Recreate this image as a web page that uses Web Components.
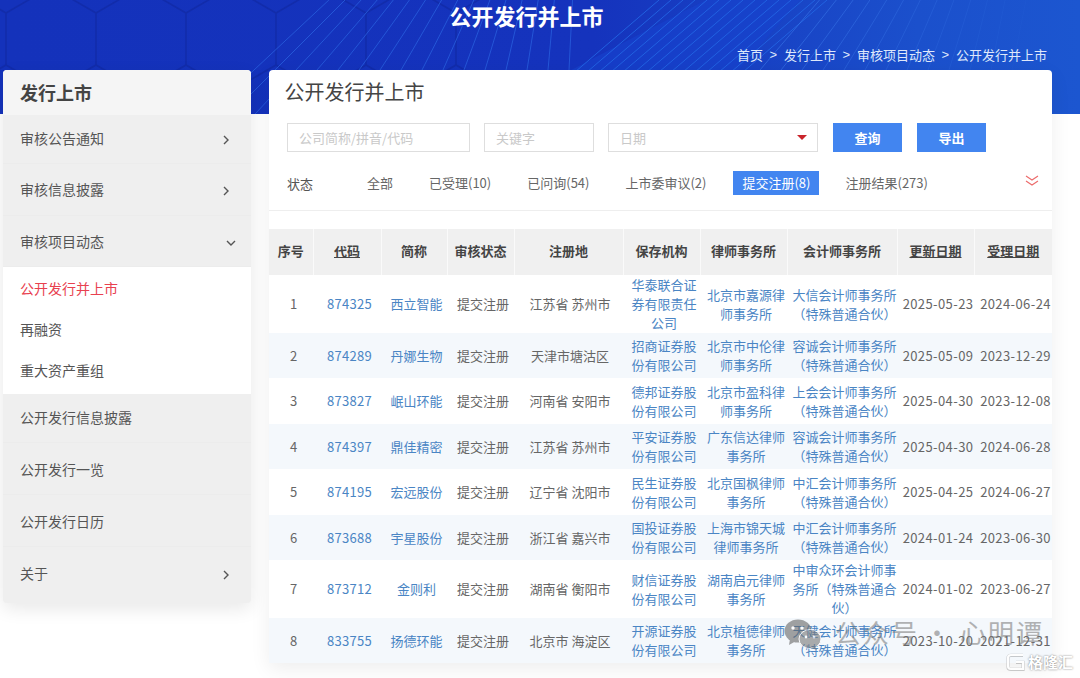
<!DOCTYPE html>
<html lang="zh-CN">
<head>
<meta charset="utf-8">
<title>公开发行并上市</title>
<style>
  html, body { margin: 0; height: 678px; overflow: hidden; background: #fff; }
  body { font-family: "Noto Sans CJK SC", "Liberation Sans", sans-serif; color: #666; }
</style>
</head>
<body>
<page-banner>
  <span slot="title">公开发行并上市</span>
  <span>首页</span><span>发行上市</span><span>审核项目动态</span><span>公开发行并上市</span>
</page-banner>
<page-body>
  <side-nav slot="side"></side-nav>
  <listing-card slot="main"></listing-card>
</page-body>
<water-mark></water-mark>

<script>
// --- Data ---
const NAV = [
    { label: '审核公告通知', h: 49, pb: 2, arrow: 'right' },
    { label: '审核信息披露', h: 51.5, arrow: 'right' },
    { label: '审核项目动态', h: 51.5, arrow: 'down', children: ['公开发行并上市', '再融资', '重大资产重组'] },
    { label: '公开发行信息披露', h: 49, pb: 2 },
    { label: '公开发行一览', h: 52 },
    { label: '公开发行日历', h: 52 },
    { label: '关于', h: 56, pb: 4, arrow: 'right' }
];

const FILTERS = ['全部', '已受理(10)', '已问询(54)', '上市委审议(2)', '提交注册(8)', '注册结果(273)'];

const COLUMNS = [
    ['序号', 44], ['代码', 68, true], ['简称', 66], ['审核状态', 67], ['注册地', 109],
    ['保存机构', 77], ['律师事务所', 87], ['会计师事务所', 110], ['更新日期', 77, true], ['受理日期', 78, true]
];

const SPECIAL = '（特殊普通合伙）';
const ROWS = [
    ['874325', '西立智能', '江苏省 苏州市', '华泰联合证券有限责任公司', '北京市嘉源律师事务所', '大信会计师事务所' + SPECIAL, '2025-05-23', '2024-06-24'],
    ['874289', '丹娜生物', '天津市塘沽区', '招商证券股份有限公司', '北京市中伦律师事务所', '容诚会计师事务所' + SPECIAL, '2025-05-09', '2023-12-29'],
    ['873827', '岷山环能', '河南省 安阳市', '德邦证券股份有限公司', '北京市盈科律师事务所', '上会会计师事务所' + SPECIAL, '2025-04-30', '2023-12-08'],
    ['874397', '鼎佳精密', '江苏省 苏州市', '平安证券股份有限公司', '广东信达律师事务所', '容诚会计师事务所' + SPECIAL, '2025-04-30', '2024-06-28'],
    ['874195', '宏远股份', '辽宁省 沈阳市', '民生证券股份有限公司', '北京国枫律师事务所', '中汇会计师事务所' + SPECIAL, '2025-04-25', '2024-06-27'],
    ['873688', '宇星股份', '浙江省 嘉兴市', '国投证券股份有限公司', '上海市锦天城律师事务所', '中汇会计师事务所' + SPECIAL, '2024-01-24', '2023-06-30'],
    ['873712', '金则利', '湖南省 衡阳市', '财信证券股份有限公司', '湖南启元律师事务所', '中审众环会计师事务所' + SPECIAL, '2024-01-02', '2023-06-27'],
    ['833755', '扬德环能', '北京市 海淀区', '开源证券股份有限公司', '北京植德律师事务所', '天健会计师事务所' + SPECIAL, '2023-10-20', '2021-12-31']
];

// --- Banner with the hexagon and line artwork ---
class PageBanner extends HTMLElement {
    constructor() {
        super();
        this.attachShadow({ mode: 'open' });
    }

    connectedCallback() {
        const crumbs = [...this.querySelectorAll(':scope > span:not([slot])')];
        crumbs.forEach((c, i) => {
            c.slot = 'c' + i;
        });
        this.shadowRoot.innerHTML = `
            <style>
                :host {
                    display: block;
                    height: 114px;
                    overflow: hidden;
                    position: relative;
                    background: linear-gradient(90deg, #1432bb 0%, #1533bd 55%, #1b50cc 85%, #1c56d0 100%);
                }
                svg { position: absolute; left: 0; top: 0; }
                .inner {
                    position: relative;
                    height: 100%;
                    box-sizing: border-box;
                    display: flex;
                    flex-direction: column;
                    align-items: center;
                }
                .title {
                    margin: -1px 27px 0 0;
                    font-size: 22px;
                    line-height: 33px;
                    font-weight: 700;
                    color: #fff;
                }
                .crumbs {
                    align-self: flex-end;
                    margin: 14px 33px 0 0;
                    display: flex;
                    font-size: 13px;
                    line-height: 18px;
                    color: #dfe8fb;
                }
                .sep { margin: 0 7px 0 6.4px; font-family: "Liberation Sans", sans-serif; }
            </style>
            <svg width="1080" height="114" viewBox="0 0 1080 114">${this.art()}</svg>
            <div class="inner">
                <div class="title"><slot name="title"></slot></div>
                <div class="crumbs">
                    ${crumbs.map((c, i) => `<slot name="c${i}"></slot>${i < crumbs.length - 1 ? '<span class="sep">&gt;</span>' : ''}`).join('')}
                </div>
            </div>
        `;
    }

    art() {
        let out = '';
        // hexagons, left part
        let hex = '';
        for (let col = 0; col < 6; col++) {
            const x = 6 + col * 90;
            hex += `M${x - 45} -13L${x} 13L${x + 45} -13M${x} 13V65M${x - 45} 91L${x} 65L${x + 45} 91M${x + 45} 91V114M${x - 45} 91V114`;
        }
        out += `<path d="${hex}" fill="none" stroke="#122aa6" stroke-width="1.6" opacity=".8"/>`;

        // fan of thin lines over the middle
        for (let i = -1; i < 15; i++) {
            const xb = 275 + i * 21;
            const k = Math.max(0.05, (575 - xb) / 300);
            out += `<line x1="${xb - 44 * k}" y1="114" x2="${xb + 70 * k}" y2="0" stroke="#2a62e0" stroke-width="1" opacity=".75"/>`;
        }

        // brighter sheet at the right of the title
        out += '<path d="M560 76Q620 44 706 0H800L700 114H560Z" fill="#1844cf" opacity=".55"/>';
        for (let i = 0; i < 15; i++) {
            const xb = 575 + i * 12;
            out += `<line x1="${xb}" y1="72" x2="${xb + 84}" y2="0" stroke="#2468e6" stroke-width="1" opacity=".85"/>`;
        }

        // lines that fade out towards the right
        for (let i = 0; i < 13; i++) {
            const xb = 760 + i * 21;
            const k = Math.max(0.2, 0.85 - i * 0.06);
            const op = Math.max(0.08, 0.6 - i * 0.045);
            out += `<line x1="${xb - 44 * k}" y1="114" x2="${xb + 70 * k}" y2="0" stroke="#3a78ea" stroke-width="1" opacity="${op}"/>`;
        }
        return out;
    }
}

// --- Layout under the banner ---
class PageBody extends HTMLElement {
    constructor() {
        super();
        this.attachShadow({ mode: 'open' });
        this.shadowRoot.innerHTML = `
            <style>
                :host {
                    display: flex;
                    align-items: flex-start;
                    gap: 18px;
                    position: relative;
                    margin-top: -44px;
                    padding-left: 3px;
                }
            </style>
            <slot name="side"></slot>
            <slot name="main"></slot>
        `;
    }
}

// --- Left navigation ---
class SideNav extends HTMLElement {
    constructor() {
        super();
        this.attachShadow({ mode: 'open' });
    }

    connectedCallback() {
        const arrows = {
            right: '<svg class="arrow" width="6" height="10" viewBox="0 0 6 10"><path d="M1 1l4 4-4 4" fill="none" stroke="#555" stroke-width="1.4"/></svg>',
            down: '<svg class="arrow down" width="10" height="6" viewBox="0 0 10 6"><path d="M1 1l4 4 4-4" fill="none" stroke="#555" stroke-width="1.4"/></svg>'
        };
        this.shadowRoot.innerHTML = `
            <style>
                :host {
                    display: block;
                    width: 248px;
                    border-radius: 4px;
                    overflow: hidden;
                    background: #efefef;
                    box-shadow: 0 6px 18px rgba(0, 0, 0, 0.09);
                    font-size: 14px;
                    color: #555;
                }
                .head {
                    height: 45px;
                    box-sizing: border-box;
                    padding: 0 0 1px 17px;
                    display: flex;
                    align-items: center;
                    background: #f5f5f5;
                    font-size: 18px;
                    font-weight: 700;
                    color: #444;
                }
                .row {
                    display: flex;
                    align-items: center;
                    justify-content: space-between;
                    box-sizing: border-box;
                    padding: 0 22px 0 17px;
                    border-bottom: 1px solid #ececec;
                }
                .row:last-child { border-bottom: none; }
                .arrow { margin-top: 4px; }
                .arrow.down { margin-right: -7px; }
                .subs { background: #fff; padding: 1px 0 3px; }
                .sub {
                    height: 41px;
                    line-height: 41px;
                    padding-left: 17px;
                    color: #555;
                }
                .sub.on { color: #e8414f; }
            </style>
            <div class="head">发行上市</div>
            ${NAV.map(n => `
                <div class="row" style="height:${n.h}px;padding-bottom:${n.pb || 0}px"><span>${n.label}</span>${n.arrow ? arrows[n.arrow] : ''}</div>
                ${n.children ? `<div class="subs">${n.children.map((c, i) => `<div class="sub${i === 0 ? ' on' : ''}">${c}</div>`).join('')}</div>` : ''}
            `).join('')}
        `;
    }
}

// --- Search field ---
class SearchField extends HTMLElement {
    constructor() {
        super();
        this.attachShadow({ mode: 'open' });
        this.shadowRoot.innerHTML = `
            <style>
                :host {
                    display: flex;
                    align-items: center;
                    justify-content: space-between;
                    box-sizing: border-box;
                    height: 29px;
                    padding: 0 10px 0 11px;
                    border: 1px solid #dedede;
                    font-size: 13px;
                    color: #c9c9c9;
                    background: #fff;
                }
                .tri { display: none; width: 0; height: 0; border: 5px solid transparent; border-top: 5px solid #c9242b; border-bottom: 0; }
                :host([dropdown]) .tri { display: block; }
            </style>
            <slot></slot>
            <span class="tri"></span>
        `;
    }
}

// --- Filter tab ---
class FilterTab extends HTMLElement {
    constructor() {
        super();
        this.attachShadow({ mode: 'open' });
        this.shadowRoot.innerHTML = `
            <style>
                :host {
                    display: block;
                    height: 24px;
                    line-height: 23px;
                    padding: 0 10px;
                    font-size: 13px;
                    color: #666;
                    white-space: nowrap;
                }
                :host([active]) { background: #4285f0; color: #fff; padding: 0 9px; margin-left: 1px; }
            </style>
            <slot></slot>
        `;
    }
}

// --- Table of projects ---
class ProjectTable extends HTMLElement {
    constructor() {
        super();
        this.attachShadow({ mode: 'open' });
    }

    connectedCallback() {
        const link = t => `<a>${t}</a>`;
        this.shadowRoot.innerHTML = `
            <style>
                :host { display: block; font-size: 13px; color: #666; }
                table {
                    width: 783px;
                    table-layout: fixed;
                    border-collapse: collapse;
                }
                th {
                    box-sizing: border-box;
                    height: 46px;
                    padding: 0 0 3px;
                    background: #f0f0f0;
                    border-left: 1px solid #fafafa;
                    color: #444;
                    font-weight: 700;
                }
                th:first-child { border-left: none; }
                th.sort { text-decoration: underline; }
                td {
                    box-sizing: border-box;
                    height: 45.5px;
                    padding: 0 0 0.5px 5px;
                    line-height: 19px;
                    text-align: center;
                }
                td:nth-child(5) { padding-left: 3px; }
                tr:nth-child(even) td { background: #f4f8fc; }
                a { color: #4a85c4; }
                .num { letter-spacing: 0.3px; }
                .date { letter-spacing: 0.4px; white-space: nowrap; }
            </style>
            <table>
                <colgroup>${COLUMNS.map(c => `<col style="width:${c[1]}px">`).join('')}</colgroup>
                <thead><tr>${COLUMNS.map(c => `<th class="${c[2] ? 'sort' : ''}">${c[0]}</th>`).join('')}</tr></thead>
                <tbody>
                    ${ROWS.map((r, i) => `<tr>
                        <td>${i + 1}</td>
                        <td class="num">${link(r[0])}</td>
                        <td>${link(r[1])}</td>
                        <td>提交注册</td>
                        <td>${r[2]}</td>
                        <td>${link(r[3])}</td>
                        <td>${link(r[4])}</td>
                        <td>${link(r[5])}</td>
                        <td class="date">${r[6]}</td>
                        <td class="date">${r[7]}</td>
                    </tr>`).join('')}
                </tbody>
            </table>
        `;
    }
}

// --- Main card ---
class ListingCard extends HTMLElement {
    constructor() {
        super();
        this.attachShadow({ mode: 'open' });
    }

    connectedCallback() {
        this.shadowRoot.innerHTML = `
            <style>
                :host {
                    display: block;
                    width: 783px;
                    background: #fff;
                    border-radius: 4px 4px 0 0;
                    box-shadow: 0 6px 20px rgba(0, 0, 0, 0.07);
                }
                h1 {
                    margin: 0;
                    padding: 7px 0 0 15.5px;
                    font-size: 20px;
                    line-height: 30px;
                    font-weight: 400;
                    color: #444;
                }
                .search {
                    display: flex;
                    gap: 14px;
                    margin: 16px 0 0 18px;
                }
                .btn {
                    width: 69px;
                    height: 29px;
                    margin-left: 1px;
                    line-height: 29px;
                    text-align: center;
                    background: #4285f0;
                    color: #fff;
                    font-size: 13px;
                    font-weight: 700;
                }
                .status {
                    display: flex;
                    align-items: center;
                    gap: 16px;
                    height: 59px;
                    box-sizing: border-box;
                    padding: 3px 0 0 18px;
                    border-bottom: 1px solid #eeeeee;
                    font-size: 13px;
                    color: #555;
                }
                .status .lab { width: 54px; flex: none; padding-top: 1px; }
                .chev { margin-left: auto; margin-right: 13px; margin-top: -3px; }
                project-table { margin-top: 18px; }
            </style>
            <h1>公开发行并上市</h1>
            <div class="search">
                <search-field style="width:183px">公司简称/拼音/代码</search-field>
                <search-field style="width:110px">关键字</search-field>
                <search-field style="width:210px" dropdown>日期</search-field>
                <div class="btn">查询</div>
                <div class="btn">导出</div>
            </div>
            <div class="status">
                <span class="lab">状态</span>
                ${FILTERS.map((f, i) => `<filter-tab ${i === 4 ? 'active' : ''}>${f}</filter-tab>`).join('')}
                <svg class="chev" width="14" height="12" viewBox="0 0 14 12"><path d="M1 1l6 4 6-4M1 6l6 4 6-4" fill="none" stroke="#ec6a6a" stroke-width="1.1"/></svg>
            </div>
            <project-table></project-table>
        `;
    }
}

// --- Watermarks over the bottom right corner ---
class WaterMark extends HTMLElement {
    constructor() {
        super();
        this.attachShadow({ mode: 'open' });
        this.shadowRoot.innerHTML = `
            <style>
                :host { display: block; position: absolute; left: 0; top: 0; width: 0; height: 0; }
                .wx { position: absolute; left: 784px; top: 619px; opacity: .6; }
                .txt {
                    position: absolute;
                    left: 835px;
                    top: 612px;
                    font-size: 26px;
                    line-height: 40px;
                    letter-spacing: 2px;
                    white-space: nowrap;
                    color: #777;
                    opacity: .55;
                    display: flex;
                }
                .dot { margin: 0 8px 0 5px; }
                .logo { position: absolute; left: 1006px; top: 652px; opacity: .95; }
                .gelong {
                    position: absolute;
                    left: 1028px;
                    top: 651px;
                    font-size: 15px;
                    line-height: 22px;
                    font-weight: 700;
                    white-space: nowrap;
                    color: #fff;
                    text-shadow: 0 0 2px rgba(0, 0, 0, .55);
                }
            </style>
            <svg class="wx" width="38" height="32" viewBox="0 0 38 32">
                <ellipse cx="14" cy="12" rx="13.5" ry="11.5" fill="#666"/>
                <path d="M6 20l-1 6 7-4z" fill="#666"/>
                <ellipse cx="26" cy="20" rx="11" ry="9.5" fill="#777" stroke="#fff" stroke-width="1"/>
                <path d="M31 27l2 4-6-2z" fill="#777"/>
                <circle cx="9" cy="9" r="1.7" fill="#fff"/><circle cx="18" cy="9" r="1.7" fill="#fff"/>
                <circle cx="22" cy="18" r="1.4" fill="#fff"/><circle cx="30" cy="18" r="1.4" fill="#fff"/>
            </svg>
            <div class="txt"><span>公众号</span><span class="dot">·</span><span>心明谭</span></div>
            <svg class="logo" width="20" height="20" viewBox="0 0 20 20">
                <path d="M17 3H5Q2 3 2 6V14Q2 17 5 17H17V10H10" fill="none" stroke="#000" stroke-opacity=".2" stroke-width="3.2" transform="translate(0 .4)"/>
                <path d="M17 3H5Q2 3 2 6V14Q2 17 5 17H17V10H10" fill="none" stroke="#fff" stroke-width="2.2"/>
            </svg>
            <div class="gelong">格隆汇</div>
        `;
    }
}

// Define Custom Elements
customElements.define('page-banner', PageBanner);
customElements.define('page-body', PageBody);
customElements.define('side-nav', SideNav);
customElements.define('search-field', SearchField);
customElements.define('filter-tab', FilterTab);
customElements.define('project-table', ProjectTable);
customElements.define('listing-card', ListingCard);
customElements.define('water-mark', WaterMark);
</script>
</body>
</html>
